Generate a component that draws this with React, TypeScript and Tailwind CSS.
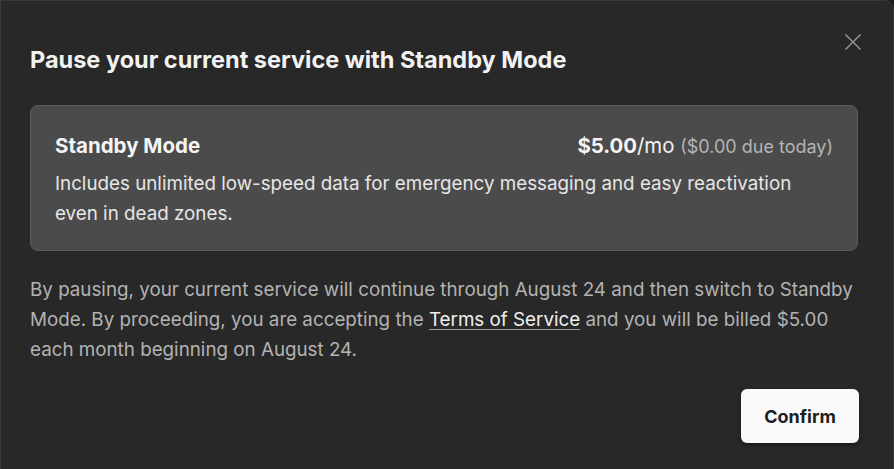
import React from "react";

export default function App() {
  return (
    <div
      className="w-[894px] h-[469px] bg-[#1f1f1f] overflow-hidden"
      style={{ fontFamily: "Inter, Roboto, 'Noto Sans', sans-serif" }}
    >
      <div className="relative w-[894px] h-[500px] bg-[#282828] border border-[#3a3a3a] rounded-tr-[10px] px-[29px] pt-[43px]">
        <button className="absolute right-[31px] top-[32px] w-[18px] h-[18px] text-[#9a9a9a]">
          <svg viewBox="0 0 18 18" width="18" height="18" fill="none" stroke="currentColor" strokeWidth="1.4">
            <path d="M1.5 1.5 L16.5 16.5 M16.5 1.5 L1.5 16.5" />
          </svg>
        </button>
        <h1 className="text-[23.5px] leading-[32px] font-bold text-[#f2f2f2]">
          Pause your current service with Standby Mode
        </h1>
        <div className="mt-[29px] w-[828px] rounded-[8px] bg-[#4b4b4b] border border-[#5a5a5a] px-[24px] pt-[25px] pb-[21px]">
          <div className="flex items-baseline justify-between">
            <span className="text-[20.5px] leading-[30px] font-bold text-[#f4f4f4]">Standby Mode</span>
            <span className="text-[20.4px] leading-[30px] text-[#f4f4f4]">
              <span className="font-bold">$5.00</span>/mo{" "}
              <span className="text-[18px] text-[#b4b4b4]">($0.00 due today)</span>
            </span>
          </div>
          <p className="mt-[7px] text-[18.8px] leading-[30px] text-[#e6e6e6] w-[770px]">
            Includes unlimited low-speed data for emergency messaging and easy reactivation even in dead zones.
          </p>
        </div>
        <p className="mt-[24px] text-[18.8px] leading-[30px] text-[#b3b3b3] w-[832px]">
          By pausing, your current service will continue through August 24 and then switch to Standby Mode. By proceeding, you are accepting the{" "}
          <a className="text-[#f0f0f0] underline underline-offset-[3px] decoration-[#9a9a9a]">Terms of Service</a> and you will be billed $5.00 each month beginning on August 24.
        </p>
        <div className="flex justify-end mt-[24px] w-[829px]">
          <button className="w-[118px] h-[54px] rounded-[6px] bg-[#fafafa] text-[#1e1e1e] text-[18px] font-bold shadow-[0_2px_4px_rgba(0,0,0,0.4)]">
            Confirm
          </button>
        </div>
      </div>
    </div>
  );
}
